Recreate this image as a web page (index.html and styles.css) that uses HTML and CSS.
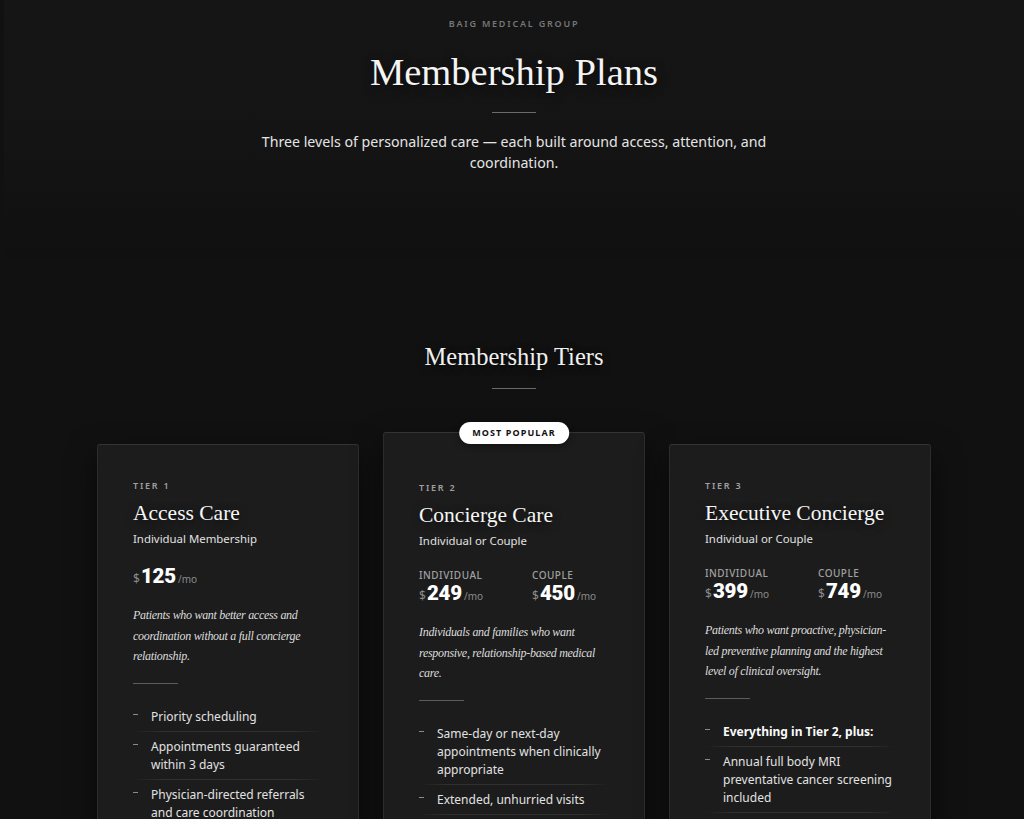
FILE: index.html
```html
<!DOCTYPE html>
<html lang="en">
<head>
<meta charset="utf-8">
<title>Membership Plans — Baig Medical Group</title>
<link rel="stylesheet" href="styles.css">
</head>
<body>
<div class="page">
<header class="hero">
  <p class="eyebrow">Baig Medical Group</p>
  <h1 class="hero-title">Membership Plans</h1>
  <div class="rule"></div>
  <p class="hero-lead">Three levels of personalized care — each built around access, attention, and coordination.</p>
</header>

<section class="tiers">
  <h2 class="section-title">Membership Tiers</h2>
  <div class="rule"></div>

  <div class="cards">
    <article class="card">
      <p class="tier">Tier 1</p>
      <h3 class="card-title">Access Care</h3>
      <p class="card-sub">Individual Membership</p>
      <div class="prices single">
        <div class="price"><span class="cur">$</span><span class="amt">125</span><span class="per">/mo</span></div>
      </div>
      <p class="desc">Patients who want better access and coordination without a full concierge relationship.</p>
      <div class="mini-rule"></div>
      <ul class="features">
        <li>Priority scheduling</li>
        <li>Appointments guaranteed within 3 days</li>
        <li>Physician-directed referrals and care coordination</li>
      </ul>
    </article>

    <article class="card featured">
      <span class="badge">Most Popular</span>
      <p class="tier">Tier 2</p>
      <h3 class="card-title">Concierge Care</h3>
      <p class="card-sub">Individual or Couple</p>
      <div class="prices">
        <div class="price-col">
          <p class="price-label">Individual</p>
          <div class="price"><span class="cur">$</span><span class="amt">249</span><span class="per">/mo</span></div>
        </div>
        <div class="price-col">
          <p class="price-label">Couple</p>
          <div class="price"><span class="cur">$</span><span class="amt">450</span><span class="per">/mo</span></div>
        </div>
      </div>
      <p class="desc">Individuals and families who want responsive, relationship-based medical care.</p>
      <div class="mini-rule"></div>
      <ul class="features">
        <li>Same-day or next-day appointments when clinically appropriate</li>
        <li>Extended, unhurried visits</li>
      </ul>
    </article>

    <article class="card">
      <p class="tier">Tier 3</p>
      <h3 class="card-title">Executive Concierge</h3>
      <p class="card-sub">Individual or Couple</p>
      <div class="prices">
        <div class="price-col">
          <p class="price-label">Individual</p>
          <div class="price"><span class="cur">$</span><span class="amt">399</span><span class="per">/mo</span></div>
        </div>
        <div class="price-col">
          <p class="price-label">Couple</p>
          <div class="price"><span class="cur">$</span><span class="amt">749</span><span class="per">/mo</span></div>
        </div>
      </div>
      <p class="desc">Patients who want proactive, physician-led preventive planning and the highest level of clinical oversight.</p>
      <div class="mini-rule"></div>
      <ul class="features">
        <li class="strong">Everything in Tier 2, plus:</li>
        <li>Annual full body MRI preventative cancer screening included</li>
      </ul>
    </article>
  </div>
</section>
</div>
</body>
</html>
```

FILE: styles.css
```css
* { box-sizing: border-box; }

html, body {
  margin: 0;
  padding: 0;
}

body {
  background: #111111;
  color: #e6e6e6;
  font-family: "Noto Sans", "DejaVu Sans", sans-serif;
}

.page {
  padding-left: 4px;
}

p, h1, h2, h3, ul { margin: 0; }

.hero {
  display: flex;
  flex-direction: column;
  align-items: center;
  padding: 17px 20px 88px;
  background: linear-gradient(180deg, #151515 0%, #141414 55%, #101010 100%);
  text-align: center;
}

.eyebrow {
  font-size: 9px;
  line-height: 14px;
  font-weight: 600;
  letter-spacing: 1.8px;
  text-transform: uppercase;
  color: #777;
}

.hero-title {
  margin-top: 18px;
  font-family: "Liberation Serif", "DejaVu Serif", serif;
  font-weight: 400;
  font-size: 38.6px;
  line-height: 46px;
  color: #f4f4f4;
  text-shadow: 0 2px 10px rgba(0,0,0,0.6);
}

.rule {
  width: 44px;
  height: 1px;
  background: #6a6a6a;
  margin: 17px auto 0;
}

.hero-lead {
  margin-top: 18px;
  max-width: 540px;
  font-size: 14.2px;
  line-height: 21px;
  color: #e4e4e4;
}

.tiers {
  padding: 81px 20px 60px;
  background: #111111;
}

.section-title {
  text-align: center;
  font-family: "Liberation Serif", "DejaVu Serif", serif;
  font-weight: 400;
  font-size: 24.5px;
  line-height: 29px;
  color: #f0f0f0;
  text-shadow: 0 2px 8px rgba(0,0,0,0.6);
}

.cards {
  margin: 55px auto 0;
  width: 834px;
  display: grid;
  grid-template-columns: repeat(3, 1fr);
  gap: 24px;
  align-items: start;
}

.card {
  position: relative;
  background: #1c1c1c;
  border: 1px solid #2c2c2c;
  border-top-color: #343434;
  border-radius: 3px;
  padding: 35px 35px 40px;
  box-shadow: 0 12px 30px rgba(0,0,0,0.55);
}

.card.featured {
  margin-top: -12px;
  padding-top: 49px;
}

.badge {
  position: absolute;
  top: 0;
  left: 50%;
  transform: translate(-50%, -50%);
  background: #fff;
  color: #111;
  font-size: 9px;
  line-height: 22px;
  font-weight: 700;
  letter-spacing: 1.1px;
  text-transform: uppercase;
  padding: 0 13px;
  border-radius: 11px;
  white-space: nowrap;
  box-shadow: 0 2px 6px rgba(0,0,0,0.4);
}

.tier {
  font-size: 9px;
  line-height: 12px;
  font-weight: 600;
  letter-spacing: 1.8px;
  text-transform: uppercase;
  color: #a0a0a0;
}

.card-title {
  margin-top: 8px;
  font-family: "Liberation Serif", "DejaVu Serif", serif;
  font-weight: 400;
  font-size: 21.5px;
  line-height: 26px;
  color: #f6f6f6;
  text-shadow: 0 2px 8px rgba(0,0,0,0.5);
}

.card-sub {
  margin-top: 5px;
  font-size: 11.4px;
  line-height: 16px;
  color: #e0e0e0;
}

.prices {
  margin-top: 20px;
  display: grid;
  grid-template-columns: 1fr 1fr;
  column-gap: 36px;
}

.prices.single {
  margin-top: 18px;
  grid-template-columns: 1fr;
}

.price-label {
  font-size: 10px;
  line-height: 12px;
  font-weight: 500;
  letter-spacing: 0.5px;
  text-transform: uppercase;
  color: #a0a0a0;
}

.price-col .price {
  margin-top: 1px;
}

.price {
  display: flex;
  align-items: baseline;
  line-height: 23px;
  white-space: nowrap;
}

.cur {
  font-size: 12px;
  color: #8a8a8a;
  margin-right: 1px;
}

.amt {
  font-family: Roboto, "Liberation Sans", sans-serif;
  font-size: 20.5px;
  font-weight: 900;
  color: #ffffff;
  letter-spacing: -0.2px;
}

.per {
  margin-left: 2px;
  font-size: 10px;
  color: #8a8a8a;
}

.desc {
  margin-top: 14px;
  font-family: "Liberation Serif", "DejaVu Serif", serif;
  font-style: italic;
  font-size: 12px;
  letter-spacing: -0.3px;
  line-height: 20.5px;
  color: #dcdcdc;
}

.mini-rule {
  width: 45px;
  height: 1px;
  background: #5c5c5c;
  margin-top: 16px;
}

.features {
  list-style: none;
  padding: 0;
  margin-top: 24px;
}

.features li {
  display: flex;
  gap: 13px;
  padding: 0 0 6px;
  margin-bottom: 6px;
  font-size: 12px;
  line-height: 18px;
  color: #e2e2e2;
  background: linear-gradient(90deg, rgba(60,60,60,0) 0%, #303030 15%, #303030 85%, rgba(60,60,60,0) 100%) bottom / 100% 1px no-repeat;
}

.features li::before {
  content: "";
  flex: 0 0 5px;
  height: 1px;
  margin-top: 6px;
  background: #8a8a8a;
}

.features li.strong {
  font-weight: 700;
  color: #fafafa;
}
```
